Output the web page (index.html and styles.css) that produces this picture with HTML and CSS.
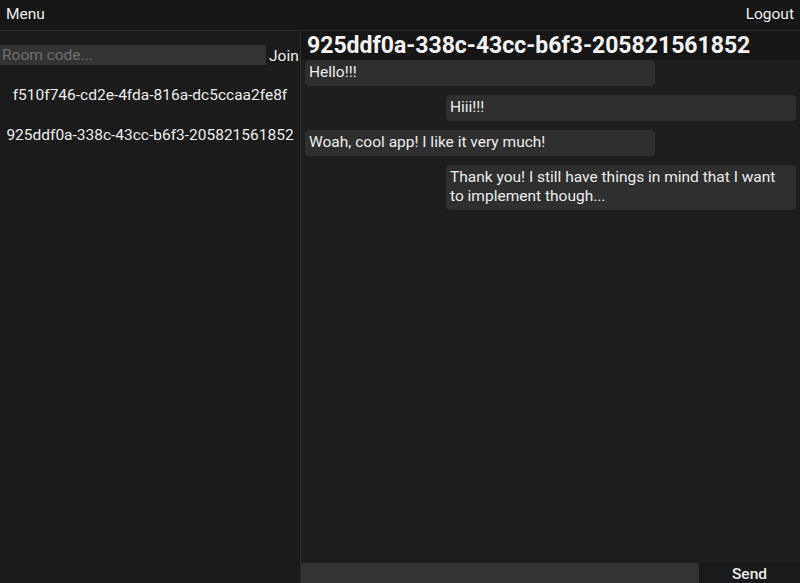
FILE: index.html
```html
<!DOCTYPE html>
<html>
<head>
<meta charset="utf-8">
<link rel="stylesheet" href="styles.css">
</head>
<body>
<div class="app">
  <header class="topbar">
    <span class="topbar-btn">Menu</span>
    <span class="topbar-btn">Logout</span>
  </header>
  <div class="main">
    <aside class="sidebar">
      <div class="join-row">
        <input class="room-input" type="text" placeholder="Room code...">
        <button class="join-btn">Join</button>
      </div>
      <ul class="room-list">
        <li class="room">f510f746-cd2e-4fda-816a-dc5ccaa2fe8f</li>
        <li class="room">925ddf0a-338c-43cc-b6f3-205821561852</li>
      </ul>
    </aside>
    <section class="chat">
      <h1 class="chat-title">925ddf0a-338c-43cc-b6f3-205821561852</h1>
      <div class="messages">
        <div class="msg msg-left">Hello!!!</div>
        <div class="msg msg-right">Hiii!!!</div>
        <div class="msg msg-left">Woah, cool app! I like it very much!</div>
        <div class="msg msg-right">Thank you! I still have things in mind that I want to implement though...</div>
      </div>
      <div class="composer">
        <input class="msg-input" type="text">
        <button class="send-btn">Send</button>
      </div>
    </section>
  </div>
</div>
</body>
</html>
```
FILE: styles.css
```css
* { box-sizing: border-box; }
html, body {
  margin: 0;
  height: 100%;
  background: #1b1b1b;
  color: #ececec;
  font-family: Roboto, "Noto Sans", sans-serif;
}
.app {
  display: flex;
  flex-direction: column;
  height: 583px;
}
.topbar {
  height: 31px;
  display: flex;
  justify-content: space-between;
  align-items: center;
  padding: 0 6px 2px 6px;
  background: #161616;
  border-bottom: 1px solid #2a2a2a;
  font-size: 15.5px;
}
.main {
  flex: 1;
  display: flex;
  min-height: 0;
}
.sidebar {
  width: 301px;
  background: #1b1b1b;
  border-right: 1px solid #2b2b2b;
  padding-top: 14px;
}
.join-row {
  display: flex;
  align-items: center;
  height: 20px;
}
.room-input {
  width: 266px;
  height: 20px;
  border: none;
  outline: none;
  background: #333333;
  color: #ddd;
  font-family: inherit;
  font-size: 15.5px;
  padding: 0 2px;
}
.room-input::placeholder { color: #6f6f6f; }
.join-btn {
  background: none;
  border: none;
  color: #ececec;
  font-family: inherit;
  font-size: 15.5px;
  padding: 0 0 0 3px;
  margin-top: 2px;
}
.room-list {
  list-style: none;
  margin: 10px 0 0 0;
  padding: 0;
}
.room {
  height: 40px;
  line-height: 40px;
  text-align: center;
  font-size: 15.5px;
  white-space: nowrap;
}
.chat {
  flex: 1;
  display: flex;
  flex-direction: column;
  background: #1e1e1e;
  min-width: 0;
}
.chat-title {
  margin: 0;
  height: 29px;
  line-height: 29px;
  padding-left: 6px;
  font-size: 23px;
  font-weight: 700;
  background: #161616;
  color: #f4f4f4;
  white-space: nowrap;
}
.messages {
  flex: 1;
  display: flex;
  flex-direction: column;
  gap: 9px;
  padding: 0 4px;
}
.msg {
  width: 350px;
  background: #2f2f2f;
  border-radius: 4px;
  padding: 3px 4px 4px 4px;
  font-size: 15.5px;
  line-height: 19px;
}
.msg-right { align-self: flex-end; }
.composer {
  display: flex;
  height: 20px;
}
.msg-input {
  flex: 1;
  height: 20px;
  border: none;
  outline: none;
  background: #333333;
  color: #ddd;
}
.send-btn {
  width: 101px;
  height: 20px;
  border: none;
  background: #1a1a1a;
  color: #ececec;
  font-family: inherit;
  font-size: 15.5px;
  font-weight: 500;
  padding: 2px 0 0 0;
}
```
